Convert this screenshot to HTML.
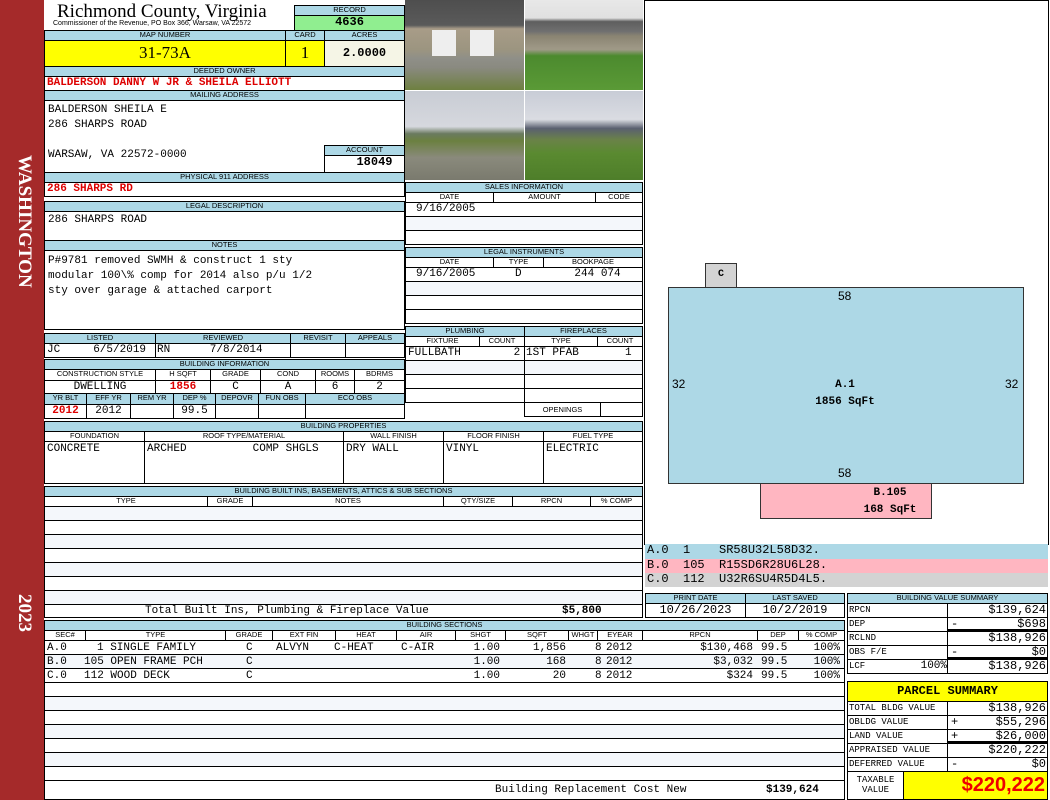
<!DOCTYPE html>
<html><head><meta charset="utf-8"><style>
body{margin:0;width:1050px;height:800px;position:relative;background:#fff;overflow:hidden;font-family:"Liberation Sans",sans-serif}
div{position:absolute;box-sizing:border-box}
.h{background:#add8e6;border:1px solid #000;font-size:7.5px;text-align:center;line-height:8px;color:#000;white-space:nowrap;overflow:hidden}
.c{border:1px solid #000;background:#fff;white-space:nowrap;overflow:hidden}
.m{font-family:"Liberation Mono",monospace;font-size:11px;line-height:13px;color:#000;white-space:nowrap}
.r{color:#d00;font-weight:bold}
.g{background:#f4f7fb}
.ln{border-bottom:1px solid #000;height:14px;left:0;right:0}
.s{font-family:"Liberation Mono",monospace;font-size:11px;line-height:14px;white-space:nowrap}
.rt{text-align:right}
</style></head><body>
<!-- sidebar -->
<div style="left:0;top:0;width:44px;height:800px;background:#a52a2a"></div>
<div style="left:8px;top:155px;width:30px;height:175px;writing-mode:vertical-rl;color:#fff;font:bold 19px 'Liberation Serif',serif;line-height:28px">WASHINGTON</div>
<div style="left:8px;top:594px;width:30px;height:50px;writing-mode:vertical-rl;color:#fff;font:bold 19px 'Liberation Serif',serif;line-height:28px">2023</div>

<!-- header -->
<div style="left:57px;top:1px;font:19px 'Liberation Serif',serif;line-height:21px">Richmond County, Virginia</div>
<div style="left:53px;top:20px;font:7px 'Liberation Sans';line-height:8px">Commissioner of the Revenue, PO Box 366, Warsaw, VA 22572</div>
<div class="h" style="left:294px;top:5px;width:111px;height:11px">RECORD</div>
<div class="c m" style="left:294px;top:15px;width:111px;height:16px;background:#90ee90;text-align:center;font-weight:bold;font-size:12px">4636</div>
<div class="h" style="left:44px;top:30px;width:242px;height:11px">MAP NUMBER</div>
<div class="h" style="left:285px;top:30px;width:40px;height:11px">CARD</div>
<div class="h" style="left:324px;top:30px;width:81px;height:11px">ACRES</div>
<div class="c" style="left:44px;top:40px;width:242px;height:27px;background:#ffff00;text-align:center;font:17px 'Liberation Serif',serif;line-height:24px">31-73A</div>
<div class="c" style="left:285px;top:40px;width:40px;height:27px;background:#ffff00;text-align:center;font:17px 'Liberation Serif',serif;line-height:24px">1</div>
<div class="c m" style="left:324px;top:40px;width:81px;height:27px;background:#f5f5e6;text-align:center;font-weight:bold;font-size:12px;line-height:24px">2.0000</div>
<div class="h" style="left:44px;top:66px;width:361px;height:11px">DEEDED OWNER</div>
<div class="c m r" style="left:44px;top:76px;width:361px;height:15px;padding-left:2px">BALDERSON DANNY W JR &amp; SHEILA ELLIOTT</div>
<div class="h" style="left:44px;top:90px;width:361px;height:11px">MAILING ADDRESS</div>
<div class="c m" style="left:44px;top:100px;width:361px;height:73px;padding:2px 0 0 3px;line-height:15px">BALDERSON SHEILA E<br>286 SHARPS ROAD<br><br>WARSAW, VA 22572-0000</div>
<div class="h" style="left:324px;top:145px;width:81px;height:11px">ACCOUNT</div>
<div class="c m" style="left:324px;top:155px;width:81px;height:18px;text-align:center;font-weight:bold;font-size:12px;padding-left:20px">18049</div>
<div class="h" style="left:44px;top:172px;width:361px;height:11px">PHYSICAL 911 ADDRESS</div>
<div class="c m r" style="left:44px;top:182px;width:361px;height:15px;padding-left:2px">286 SHARPS RD</div>
<div class="h" style="left:44px;top:201px;width:361px;height:11px">LEGAL DESCRIPTION</div>
<div class="c m" style="left:44px;top:211px;width:361px;height:30px;padding:2px 0 0 3px">286 SHARPS ROAD</div>
<div class="h" style="left:44px;top:240px;width:361px;height:11px">NOTES</div>
<div class="c m" style="left:44px;top:250px;width:361px;height:80px;padding:3px 0 0 3px;line-height:15px">P#9781 removed SWMH &amp; construct 1 sty<br>modular 100\% comp for 2014 also p/u 1/2<br>sty over garage &amp; attached carport</div>

<!-- listed -->
<div class="h" style="left:44px;top:333px;width:112px;height:11px">LISTED</div>
<div class="h" style="left:155px;top:333px;width:136px;height:11px">REVIEWED</div>
<div class="h" style="left:290px;top:333px;width:56px;height:11px">REVISIT</div>
<div class="h" style="left:345px;top:333px;width:60px;height:11px">APPEALS</div>
<div class="c m" style="left:44px;top:343px;width:112px;height:15px;padding-left:2px">JC&nbsp;&nbsp;&nbsp;&nbsp; 6/5/2019</div>
<div class="c m" style="left:155px;top:343px;width:136px;height:15px;padding-left:1px">RN&nbsp;&nbsp;&nbsp;&nbsp;&nbsp; 7/8/2014</div>
<div class="c" style="left:290px;top:343px;width:56px;height:15px"></div>
<div class="c" style="left:345px;top:343px;width:60px;height:15px"></div>
<div class="h" style="left:44px;top:359px;width:361px;height:11px">BUILDING INFORMATION</div>
<div class="c h" style="left:44px;top:369px;width:112px;height:12px;background:#fff">CONSTRUCTION STYLE</div>
<div class="c h" style="left:155px;top:369px;width:56px;height:12px;background:#fff">H SQFT</div>
<div class="c h" style="left:210px;top:369px;width:51px;height:12px;background:#fff">GRADE</div>
<div class="c h" style="left:260px;top:369px;width:56px;height:12px;background:#fff">COND</div>
<div class="c h" style="left:315px;top:369px;width:40px;height:12px;background:#fff">ROOMS</div>
<div class="c h" style="left:354px;top:369px;width:51px;height:12px;background:#fff">BDRMS</div>
<div class="c m" style="left:44px;top:380px;width:112px;height:14px;text-align:center">DWELLING</div>
<div class="c m r" style="left:155px;top:380px;width:56px;height:14px;text-align:center">1856</div>
<div class="c m" style="left:210px;top:380px;width:51px;height:14px;text-align:center">C</div>
<div class="c m" style="left:260px;top:380px;width:56px;height:14px;text-align:center">A</div>
<div class="c m" style="left:315px;top:380px;width:40px;height:14px;text-align:center">6</div>
<div class="c m" style="left:354px;top:380px;width:51px;height:14px;text-align:center">2</div>
<div class="h" style="left:44px;top:393px;width:43px;height:12px">YR BLT</div>
<div class="h" style="left:86px;top:393px;width:45px;height:12px">EFF YR</div>
<div class="h" style="left:130px;top:393px;width:44px;height:12px">REM YR</div>
<div class="h" style="left:173px;top:393px;width:43px;height:12px">DEP %</div>
<div class="h" style="left:215px;top:393px;width:44px;height:12px">DEPOVR</div>
<div class="h" style="left:258px;top:393px;width:48px;height:12px">FUN OBS</div>
<div class="h" style="left:305px;top:393px;width:100px;height:12px">ECO OBS</div>
<div class="c m r" style="left:44px;top:404px;width:43px;height:15px;text-align:center">2012</div>
<div class="c m" style="left:86px;top:404px;width:45px;height:15px;text-align:center">2012</div>
<div class="c" style="left:130px;top:404px;width:44px;height:15px"></div>
<div class="c m" style="left:173px;top:404px;width:43px;height:15px;text-align:center">99.5</div>
<div class="c" style="left:215px;top:404px;width:44px;height:15px"></div>
<div class="c" style="left:258px;top:404px;width:48px;height:15px"></div>
<div class="c" style="left:305px;top:404px;width:100px;height:15px"></div>

<!-- photos -->
<div style="left:405px;top:0;width:119px;height:90px;background:linear-gradient(#4e4e4e 0,#5a5a5a 28%,#a89c88 32%,#9c9580 55%,#8f8f88 65%,#8a8a80 75%,#6e8040 100%)"></div>
<div style="left:432px;top:30px;width:24px;height:26px;background:#eee"></div><div style="left:470px;top:30px;width:24px;height:26px;background:#eee"></div>
<div style="left:525px;top:0;width:118px;height:90px;background:linear-gradient(#e8e8e8 0,#e0e0e0 20%,#5e5e5e 24%,#707070 35%,#8a8472 40%,#a09a88 55%,#4c8a2e 62%,#5a9a36 100%)"></div>
<div style="left:405px;top:91px;width:119px;height:89px;background:linear-gradient(#c8ccd4 0,#d6d8de 40%,#6a7a60 48%,#6b8040 56%,#8a8a7c 75%,#7a7a6e 100%)"></div>
<div style="left:525px;top:91px;width:118px;height:89px;background:linear-gradient(#c8ccd6 0,#dadce2 32%,#5a6070 42%,#6a8248 55%,#5a8a30 70%,#4e7e2a 100%)"></div>

<!-- sales -->
<div class="h" style="left:405px;top:182px;width:238px;height:11px">SALES INFORMATION</div>
<div class="c h" style="left:405px;top:192px;width:89px;height:11px;background:#fff">DATE</div>
<div class="c h" style="left:493px;top:192px;width:103px;height:11px;background:#fff">AMOUNT</div>
<div class="c h" style="left:595px;top:192px;width:48px;height:11px;background:#fff">CODE</div>
<div class="c" style="left:405px;top:202px;width:238px;height:43px">
 <div class="ln m" style="top:0;padding-left:10px">9/16/2005</div><div class="ln g" style="top:14px"></div></div>
<div class="h" style="left:405px;top:247px;width:238px;height:11px">LEGAL INSTRUMENTS</div>
<div class="c h" style="left:405px;top:257px;width:89px;height:11px;background:#fff">DATE</div>
<div class="c h" style="left:493px;top:257px;width:51px;height:11px;background:#fff">TYPE</div>
<div class="c h" style="left:543px;top:257px;width:100px;height:11px;background:#fff">BOOKPAGE</div>
<div class="c" style="left:405px;top:267px;width:238px;height:57px">
 <div class="ln m" style="top:0;padding-left:10px">9/16/2005&nbsp;&nbsp;&nbsp;&nbsp;&nbsp;&nbsp;D&nbsp;&nbsp;&nbsp;&nbsp;&nbsp;&nbsp;&nbsp;&nbsp;244 074</div><div class="ln g" style="top:14px"></div><div class="ln" style="top:28px"></div></div>
<!-- plumbing -->
<div class="h" style="left:405px;top:326px;width:120px;height:11px">PLUMBING</div>
<div class="h" style="left:524px;top:326px;width:119px;height:11px">FIREPLACES</div>
<div class="c h" style="left:405px;top:336px;width:75px;height:11px;background:#fff">FIXTURE</div>
<div class="c h" style="left:479px;top:336px;width:46px;height:11px;background:#fff">COUNT</div>
<div class="c h" style="left:524px;top:336px;width:74px;height:11px;background:#fff">TYPE</div>
<div class="c h" style="left:597px;top:336px;width:46px;height:11px;background:#fff">COUNT</div>
<div class="c" style="left:405px;top:346px;width:120px;height:57px"><div class="ln m" style="top:0;padding-left:2px">FULLBATH&nbsp;&nbsp;&nbsp;&nbsp;&nbsp;&nbsp;&nbsp;&nbsp;2</div><div class="ln g" style="top:14px"></div><div class="ln" style="top:28px"></div></div>
<div class="c" style="left:524px;top:346px;width:119px;height:71px"><div class="ln m" style="top:0;padding-left:1px">1ST PFAB&nbsp;&nbsp;&nbsp;&nbsp;&nbsp;&nbsp;&nbsp;1</div><div class="ln g" style="top:14px"></div><div class="ln" style="top:28px"></div><div class="ln" style="top:42px"></div>
<div class="h" style="left:0;top:56px;width:76px;height:13px;background:#fff;border:0;border-right:1px solid #000;line-height:13px">OPENINGS</div></div>

<!-- building properties -->
<div class="h" style="left:44px;top:421px;width:599px;height:11px">BUILDING PROPERTIES</div>
<div class="c h" style="left:44px;top:431px;width:101px;height:11px;background:#fff">FOUNDATION</div>
<div class="c h" style="left:144px;top:431px;width:200px;height:11px;background:#fff">ROOF TYPE/MATERIAL</div>
<div class="c h" style="left:343px;top:431px;width:101px;height:11px;background:#fff">WALL FINISH</div>
<div class="c h" style="left:443px;top:431px;width:101px;height:11px;background:#fff">FLOOR FINISH</div>
<div class="c h" style="left:543px;top:431px;width:100px;height:11px;background:#fff">FUEL TYPE</div>
<div class="c m" style="left:44px;top:441px;width:101px;height:43px;padding:1px 2px">CONCRETE</div>
<div class="c m" style="left:144px;top:441px;width:200px;height:43px;padding:1px 2px">ARCHED&nbsp;&nbsp;&nbsp;&nbsp;&nbsp;&nbsp;&nbsp;&nbsp;&nbsp;&nbsp;COMP SHGLS</div>
<div class="c m" style="left:343px;top:441px;width:101px;height:43px;padding:1px 2px">DRY WALL</div>
<div class="c m" style="left:443px;top:441px;width:101px;height:43px;padding:1px 2px">VINYL</div>
<div class="c m" style="left:543px;top:441px;width:100px;height:43px;padding:1px 2px">ELECTRIC</div>

<!-- built ins -->
<div class="h" style="left:44px;top:486px;width:599px;height:11px">BUILDING BUILT INS, BASEMENTS, ATTICS &amp; SUB SECTIONS</div>
<div class="c h" style="left:44px;top:496px;width:164px;height:11px;background:#fff">TYPE</div>
<div class="c h" style="left:207px;top:496px;width:46px;height:11px;background:#fff">GRADE</div>
<div class="c h" style="left:252px;top:496px;width:192px;height:11px;background:#fff">NOTES</div>
<div class="c h" style="left:443px;top:496px;width:70px;height:11px;background:#fff">QTY/SIZE</div>
<div class="c h" style="left:512px;top:496px;width:79px;height:11px;background:#fff">RPCN</div>
<div class="c h" style="left:590px;top:496px;width:53px;height:11px;background:#fff">% COMP</div>
<div class="c" style="left:44px;top:506px;width:599px;height:112px">
<div class="ln g" style="top:0"></div><div class="ln" style="top:14px"></div><div class="ln g" style="top:28px"></div><div class="ln" style="top:42px"></div><div class="ln g" style="top:56px"></div><div class="ln" style="top:70px"></div><div class="ln g" style="top:84px"></div>
<div class="m" style="left:100px;top:98px">Total Built Ins, Plumbing &amp; Fireplace Value</div>
<div class="m" style="left:517px;top:98px;font-weight:bold">$5,800</div></div>

<!-- building sections -->
<div class="h" style="left:44px;top:620px;width:801px;height:11px">BUILDING SECTIONS</div>
<div class="c h" style="left:44px;top:630px;width:42px;height:11px;background:#fff">SEC#</div>
<div class="c h" style="left:85px;top:630px;width:141px;height:11px;background:#fff">TYPE</div>
<div class="c h" style="left:225px;top:630px;width:48px;height:11px;background:#fff">GRADE</div>
<div class="c h" style="left:272px;top:630px;width:64px;height:11px;background:#fff">EXT FIN</div>
<div class="c h" style="left:335px;top:630px;width:62px;height:11px;background:#fff">HEAT</div>
<div class="c h" style="left:396px;top:630px;width:60px;height:11px;background:#fff">AIR</div>
<div class="c h" style="left:455px;top:630px;width:51px;height:11px;background:#fff">SHGT</div>
<div class="c h" style="left:505px;top:630px;width:64px;height:11px;background:#fff">SQFT</div>
<div class="c h" style="left:568px;top:630px;width:30px;height:11px;background:#fff">WHGT</div>
<div class="c h" style="left:597px;top:630px;width:46px;height:11px;background:#fff">EYEAR</div>
<div class="c h" style="left:642px;top:630px;width:116px;height:11px;background:#fff">RPCN</div>
<div class="c h" style="left:757px;top:630px;width:42px;height:11px;background:#fff">DEP</div>
<div class="c h" style="left:798px;top:630px;width:47px;height:11px;background:#fff">% COMP</div>
<div class="c" style="left:44px;top:640px;width:801px;height:160px">
<div class="ln" style="top:0"></div><div class="ln g" style="top:14px"></div><div class="ln" style="top:28px"></div>
<div class="ln" style="top:42px"></div><div class="ln g" style="top:56px"></div><div class="ln" style="top:70px"></div><div class="ln g" style="top:84px"></div><div class="ln" style="top:98px"></div><div class="ln g" style="top:112px"></div><div class="ln" style="top:126px"></div>
<!-- row 1 -->
<div class="s" style="left:2px;top:0">A.0</div><div class="s" style="left:52px;top:0">1 SINGLE FAMILY</div><div class="s" style="left:201px;top:0">C</div><div class="s" style="left:231px;top:0">ALVYN</div><div class="s" style="left:289px;top:0">C-HEAT</div><div class="s" style="left:356px;top:0">C-AIR</div>
<div class="s rt" style="right:344px;top:0">1.00</div><div class="s rt" style="right:278px;top:0">1,856</div><div class="s" style="left:550px;top:0">8</div><div class="s" style="left:561px;top:0">2012</div><div class="s rt" style="right:91px;top:0">$130,468</div><div class="s" style="left:716px;top:0">99.5</div><div class="s rt" style="right:4px;top:0">100%</div>
<!-- row 2 -->
<div class="s" style="left:2px;top:14px">B.0</div><div class="s" style="left:39px;top:14px">105 OPEN FRAME PCH</div><div class="s" style="left:201px;top:14px">C</div>
<div class="s rt" style="right:344px;top:14px">1.00</div><div class="s rt" style="right:278px;top:14px">168</div><div class="s" style="left:550px;top:14px">8</div><div class="s" style="left:561px;top:14px">2012</div><div class="s rt" style="right:91px;top:14px">$3,032</div><div class="s" style="left:716px;top:14px">99.5</div><div class="s rt" style="right:4px;top:14px">100%</div>
<!-- row 3 -->
<div class="s" style="left:2px;top:28px">C.0</div><div class="s" style="left:39px;top:28px">112 WOOD DECK</div><div class="s" style="left:201px;top:28px">C</div>
<div class="s rt" style="right:344px;top:28px">1.00</div><div class="s rt" style="right:278px;top:28px">20</div><div class="s" style="left:550px;top:28px">8</div><div class="s" style="left:561px;top:28px">2012</div><div class="s rt" style="right:91px;top:28px">$324</div><div class="s" style="left:716px;top:28px">99.5</div><div class="s rt" style="right:4px;top:28px">100%</div>
<div class="m" style="left:450px;top:143px">Building Replacement Cost New</div>
<div class="m" style="left:721px;top:143px;font-weight:bold">$139,624</div></div>

<!-- sketch -->
<div class="c" style="left:644px;top:0;width:405px;height:545px"></div>
<div style="left:705px;top:263px;width:32px;height:25px;background:#d3d3d3;border:1px solid #333;font:bold 10px 'Liberation Mono';text-align:center;line-height:22px">C</div>
<div style="left:668px;top:287px;width:356px;height:197px;background:#add8e6;border:1px solid #333"></div>
<div style="left:838px;top:289px;font:12px 'Liberation Sans'">58</div>
<div style="left:838px;top:466px;font:12px 'Liberation Sans'">58</div>
<div style="left:672px;top:377px;font:12px 'Liberation Sans'">32</div>
<div style="left:1005px;top:377px;font:12px 'Liberation Sans'">32</div>
<div style="left:790px;top:377px;width:110px;text-align:center;font:bold 11px 'Liberation Mono';line-height:17px">A.1<br>1856 SqFt</div>
<div style="left:760px;top:483px;width:172px;height:36px;background:#ffb6c1;border:1px solid #333"></div>
<div style="left:850px;top:485px;width:80px;text-align:center;font:bold 11px 'Liberation Mono';line-height:17px">B.105<br>168 SqFt</div>
<div class="m" style="left:645px;top:544px;width:403px;height:15px;background:#add8e6;font-size:12px;padding-left:2px">A.0&nbsp; 1&nbsp;&nbsp;&nbsp; SR58U32L58D32.</div>
<div class="m" style="left:645px;top:559px;width:403px;height:14px;background:#ffb6c1;font-size:12px;padding-left:2px">B.0&nbsp; 105&nbsp; R15SD6R28U6L28.</div>
<div class="m" style="left:645px;top:573px;width:403px;height:14px;background:#d3d3d3;font-size:12px;padding-left:2px">C.0&nbsp; 112&nbsp; U32R6SU4R5D4L5.</div>

<!-- print date -->
<div class="h" style="left:645px;top:593px;width:101px;height:11px">PRINT DATE</div>
<div class="h" style="left:745px;top:593px;width:100px;height:11px">LAST SAVED</div>
<div class="c m" style="left:645px;top:603px;width:101px;height:15px;text-align:center;font-size:12px">10/26/2023</div>
<div class="c m" style="left:745px;top:603px;width:100px;height:15px;text-align:center;font-size:12px">10/2/2019</div>

<!-- building value summary -->
<div class="h" style="left:847px;top:593px;width:201px;height:11px">BUILDING VALUE SUMMARY</div>
<div class="c m" style="left:847px;top:603px;width:101px;height:15px;font-size:9px;padding-left:1px">RPCN</div><div class="c m" style="left:947px;top:603px;width:101px;height:15px;text-align:right;font-size:12px;padding-right:1px">$139,624</div>
<div class="c m" style="left:847px;top:617px;width:101px;height:15px;font-size:9px;padding-left:1px">DEP</div><div class="c m" style="left:947px;top:617px;width:101px;height:15px;text-align:right;font-size:12px;padding-right:1px;border-bottom:3px solid #000"><span style="float:left;padding-left:3px">-</span>$698</div>
<div class="c m" style="left:847px;top:631px;width:101px;height:15px;font-size:9px;padding-left:1px">RCLND</div><div class="c m" style="left:947px;top:631px;width:101px;height:15px;text-align:right;font-size:12px;padding-right:1px">$138,926</div>
<div class="c m" style="left:847px;top:645px;width:101px;height:15px;font-size:9px;padding-left:1px">OBS F/E</div><div class="c m" style="left:947px;top:645px;width:101px;height:15px;text-align:right;font-size:12px;padding-right:1px;border-bottom:3px solid #000"><span style="float:left;padding-left:3px">-</span>$0</div>
<div class="c m" style="left:847px;top:659px;width:101px;height:15px;font-size:9px;padding-left:1px">LCF<span style="float:right;font-size:11px">100%</span></div><div class="c m" style="left:947px;top:659px;width:101px;height:15px;text-align:right;font-size:12px;padding-right:1px">$138,926</div>

<!-- parcel summary -->
<div class="c" style="left:847px;top:681px;width:201px;height:21px;background:#ffff00;text-align:center;font:bold 12px 'Liberation Mono';line-height:19px">PARCEL SUMMARY</div>
<div class="c m" style="left:847px;top:701px;width:101px;height:15px;font-size:9px;padding-left:1px">TOTAL BLDG VALUE</div><div class="c m" style="left:947px;top:701px;width:101px;height:15px;text-align:right;font-size:12px;padding-right:1px">$138,926</div>
<div class="c m" style="left:847px;top:715px;width:101px;height:15px;font-size:9px;padding-left:1px">OBLDG VALUE</div><div class="c m" style="left:947px;top:715px;width:101px;height:15px;text-align:right;font-size:12px;padding-right:1px"><span style="float:left;padding-left:3px">+</span>$55,296</div>
<div class="c m" style="left:847px;top:729px;width:101px;height:15px;font-size:9px;padding-left:1px">LAND VALUE</div><div class="c m" style="left:947px;top:729px;width:101px;height:15px;text-align:right;font-size:12px;padding-right:1px;border-bottom:3px solid #000"><span style="float:left;padding-left:3px">+</span>$26,000</div>
<div class="c m" style="left:847px;top:743px;width:101px;height:15px;font-size:9px;padding-left:1px">APPRAISED VALUE</div><div class="c m" style="left:947px;top:743px;width:101px;height:15px;text-align:right;font-size:12px;padding-right:1px">$220,222</div>
<div class="c m" style="left:847px;top:757px;width:101px;height:15px;font-size:9px;padding-left:1px">DEFERRED VALUE</div><div class="c m" style="left:947px;top:757px;width:101px;height:15px;text-align:right;font-size:12px;padding-right:1px"><span style="float:left;padding-left:3px">-</span>$0</div>
<div class="c m" style="left:847px;top:771px;width:57px;height:29px;font-size:9px;text-align:center;line-height:10px;padding-top:3px">TAXABLE<br>VALUE</div>
<div class="c" style="left:903px;top:771px;width:145px;height:29px;background:#ffff00;text-align:right;color:#e00;font:bold 20px 'Liberation Sans';line-height:27px;padding-right:2px">$220,222</div>
</body></html>
